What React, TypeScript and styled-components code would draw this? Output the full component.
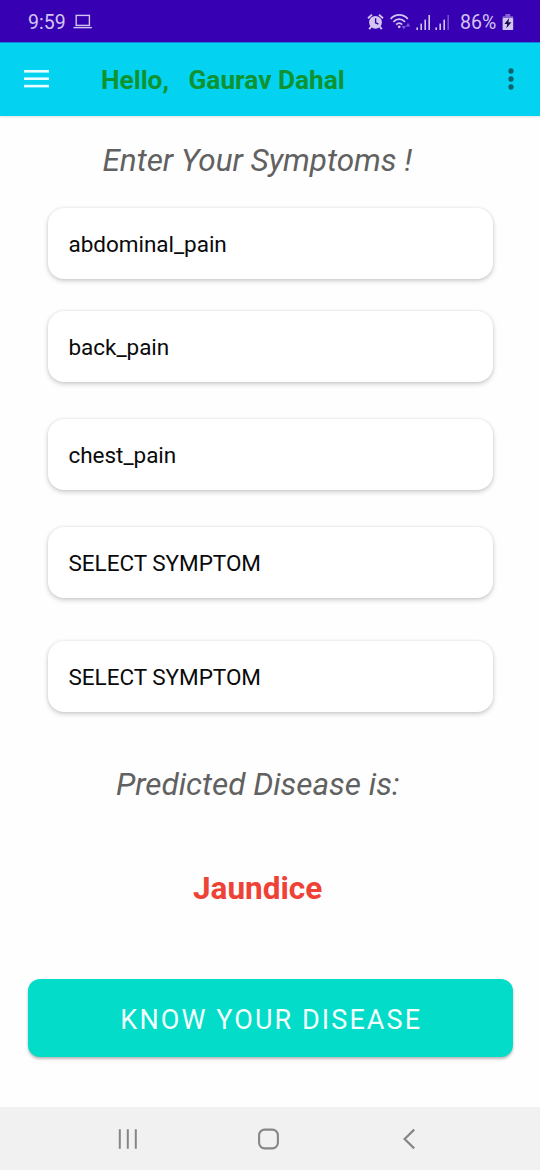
import React from "react";
import styled, { createGlobalStyle } from "styled-components";

const GlobalStyle = createGlobalStyle`
  *, *::before, *::after { box-sizing: border-box; }
  html, body { margin: 0; padding: 0; background: #fefefe; }
  body { font-family: Roboto, "Noto Sans", sans-serif; }
`;

const Screen = styled.div`
  display: flex;
  flex-direction: column;
  width: 540px;
  height: 1170px;
  overflow: hidden;
  background: #fefefe;
`;

const StatusBar = styled.header`
  display: flex;
  align-items: center;
  flex: none;
  height: 42px;
  padding: 2px 26.5px 0 28px;
  background: #3700b3;
  color: #d3c4f0;
`;

const StatusText = styled.span<{ $width: number }>`
  width: ${(p) => p.$width}px;
  padding-top: 1px;
  font-size: 19.5px;
  line-height: 24px;
  white-space: nowrap;
`;

const StatusIcons = styled.div`
  display: flex;
  align-items: center;
  gap: 4.5px;
  margin-left: auto;
`;

const BatteryStatus = styled.div`
  display: flex;
  align-items: center;
  margin-left: 6px;
`;

const AppBar = styled.div`
  display: flex;
  align-items: center;
  flex: none;
  height: 74px;
  padding: 0 24px 1px;
  border-top: 1px solid #1683da;
  background: #03d3f1;
  box-shadow: 0 1px 2px rgba(0, 0, 0, 0.12);
`;

const IconButton = styled.button`
  display: flex;
  padding: 0;
  border: 0;
  background: none;
`;

const Greeting = styled.h1`
  margin: 2px 0 0 52px;
  font-size: 26.25px;
  font-weight: 700;
  line-height: 32px;
  color: #0f9230;
  white-space: pre;
`;

const MenuSlot = styled.div`
  display: flex;
  margin-left: auto;
`;

const Content = styled.main`
  display: flex;
  flex-direction: column;
  flex: 1;
  padding: 25px 27.5px 0 28px;
`;

const Heading = styled.h2<{ $indent: number; $top?: number }>`
  margin: ${(p) => p.$top ?? 0}px 0 0 ${(p) => p.$indent}px;
  font-size: 31.5px;
  font-style: italic;
  font-weight: 400;
  line-height: 40px;
  letter-spacing: -0.02px;
  color: #616161;
  white-space: nowrap;
`;

const SymptomCard = styled.div<{ $gap: number }>`
  display: flex;
  align-items: center;
  flex: none;
  height: 71px;
  margin: ${(p) => p.$gap}px 19.5px 0;
  padding: 0 21px;
  border-radius: 16px;
  background: #fff;
  box-shadow: 0 2px 5px rgba(0, 0, 0, 0.2), 0 0 3px rgba(0, 0, 0, 0.08);
  font-size: 22.5px;
  line-height: 28px;
  letter-spacing: -0.03px;
  color: #0a0a0a;
`;

const Result = styled.p`
  margin: 64px 0 0 165px;
  font-size: 31.5px;
  font-weight: 700;
  line-height: 40px;
  color: #ee4237;
`;

const PrimaryButton = styled.button`
  flex: none;
  height: 78px;
  margin-top: 70px;
  padding: 4px 0 0 2px;
  border: 0;
  border-radius: 12px;
  background: #03dcc8;
  box-shadow: 0 2px 3px rgba(0, 0, 0, 0.28);
  font-family: inherit;
  font-size: 27px;
  letter-spacing: 2.1px;
  color: #f2fffd;
  white-space: nowrap;
`;

const NavBar = styled.nav`
  display: flex;
  align-items: center;
  justify-content: space-between;
  flex: none;
  height: 63px;
  padding: 0 120px 0 117px;
  background: #f1f1f1;
`;

const symptoms = [
  { label: "abdominal_pain", gap: 27 },
  { label: "back_pain", gap: 32 },
  { label: "chest_pain", gap: 37 },
  { label: "SELECT SYMPTOM", gap: 37 },
  { label: "SELECT SYMPTOM", gap: 43 },
];

const LaptopIcon = () => (
  <svg width="19" height="16" viewBox="0 0 19 16" fill="none" stroke="currentColor" strokeWidth="1.4">
    <rect x="3.2" y="1.4" width="13.2" height="10" />
    <path d="M0.5 13.6H18.9" />
  </svg>
);

const AlarmIcon = () => (
  <svg width="18" height="18" viewBox="0 0 18 18" fill="currentColor">
    <circle cx="8.5" cy="9.3" r="6.4" />
    <path d="M1 5.2L5 1.6M16 5.2L12 1.6M4.2 13.6L2.2 16.2M12.8 13.6L14.8 16.2" stroke="currentColor" strokeWidth="1.9" fill="none" />
    <path d="M8.6 5.2V9.8L11.4 11" stroke="#3700b3" strokeWidth="1.4" fill="none" />
  </svg>
);

const WifiIcon = () => (
  <svg width="22" height="18" viewBox="0 0 22 18" fill="none" stroke="currentColor" strokeWidth="1.8">
    <path d="M0.6 5.8C5.6 0.6 12.8 0.6 17.8 5.8" />
    <path d="M3.4 8.8C6.8 5.2 11.6 5.2 15 8.8" />
    <path d="M6.2 11.6C8.2 9.6 10.2 9.6 12.2 11.6" />
    <circle cx="9.2" cy="13.8" r="1.4" fill="currentColor" stroke="none" />
    <g opacity="0.45" fill="currentColor" stroke="none">
      <path d="M11.6 13H16L13.8 16.6Z" />
      <path d="M15.8 13.4L18 9.8L20.2 13.4Z" />
    </g>
  </svg>
);

const SignalIcon = ({ weak = false }: { weak?: boolean }) => (
  <svg width="14.5" height="17" viewBox="0 0 14.5 17" fill="currentColor">
    <rect x="0.4" y="13.4" width="1.6" height="2.6" />
    <rect x="4.4" y="9.6" width="1.6" height="6.4" />
    <rect x="8.4" y="5.6" width="1.6" height="10.4" />
    <rect x="12.4" y="1" width="1.6" height="15" opacity={weak ? 0.4 : 1} />
  </svg>
);

const BatteryIcon = () => (
  <svg width="12" height="17" viewBox="0 0 12 17" fill="currentColor">
    <path d="M3.4 0H8.2V2.4H3.4Z M0.6 2.2H11.2V4.2H0.6Z" opacity="0.5" />
    <rect x="0.6" y="4" width="10.6" height="12" rx="0.8" />
    <path d="M7.2 4L2.4 10H5.2L4.4 14.2L9.4 8.2H6.4Z" fill="#1d0a4d" />
  </svg>
);

const HamburgerIcon = () => (
  <svg width="25" height="18" viewBox="0 0 25 18" fill="#e9fcff">
    <rect x="0" y="0" width="25" height="2.6" />
    <rect x="0" y="7.4" width="25" height="2.6" />
    <rect x="0" y="14.8" width="25" height="2.6" />
  </svg>
);

const MoreIcon = () => (
  <svg width="10" height="22" viewBox="0 0 10 22" fill="#10626f">
    <circle cx="5" cy="3" r="2.7" />
    <circle cx="5" cy="11" r="2.7" />
    <circle cx="5" cy="19" r="2.7" />
  </svg>
);

const RecentsIcon = () => (
  <svg width="22" height="22" viewBox="0 0 22 22" fill="none" stroke="#868686" strokeWidth="2">
    <path d="M2.8 1.2V20.8M10.8 1.2V20.8M18.8 1.2V20.8" />
  </svg>
);

const HomeIcon = () => (
  <svg width="22" height="22" viewBox="0 0 22 22" fill="none" stroke="#868686" strokeWidth="2.1">
    <rect x="1.1" y="1.6" width="18.8" height="18.8" rx="5.6" />
  </svg>
);

const BackIcon = () => (
  <svg width="22" height="22" viewBox="0 0 22 22" fill="none" stroke="#868686" strokeWidth="2.2">
    <path d="M16.2 1.6L6.6 11L16.2 20.4" />
  </svg>
);

export default function App() {
  return (
    <Screen>
      <GlobalStyle />
      <StatusBar>
        <StatusText $width={45}>9:59</StatusText>
        <LaptopIcon />
        <StatusIcons>
          <AlarmIcon />
          <WifiIcon />
          <SignalIcon />
          <SignalIcon weak />
          <BatteryStatus>
            <StatusText $width={41.5}>86%</StatusText>
            <BatteryIcon />
          </BatteryStatus>
        </StatusIcons>
      </StatusBar>
      <AppBar>
        <IconButton aria-label="Open navigation">
          <HamburgerIcon />
        </IconButton>
        <Greeting>{"Hello,   Gaurav Dahal"}</Greeting>
        <MenuSlot>
          <IconButton aria-label="More options">
            <MoreIcon />
          </IconButton>
        </MenuSlot>
      </AppBar>
      <Content>
        <Heading $indent={74.5}>Enter Your Symptoms !</Heading>
        {symptoms.map((symptom, index) => (
          <SymptomCard key={index} $gap={symptom.gap}>
            {symptom.label}
          </SymptomCard>
        ))}
        <Heading $indent={88} $top={53}>Predicted Disease is:</Heading>
        <Result>Jaundice</Result>
        <PrimaryButton>KNOW YOUR DISEASE</PrimaryButton>
      </Content>
      <NavBar>
        <RecentsIcon />
        <HomeIcon />
        <BackIcon />
      </NavBar>
    </Screen>
  );
}
